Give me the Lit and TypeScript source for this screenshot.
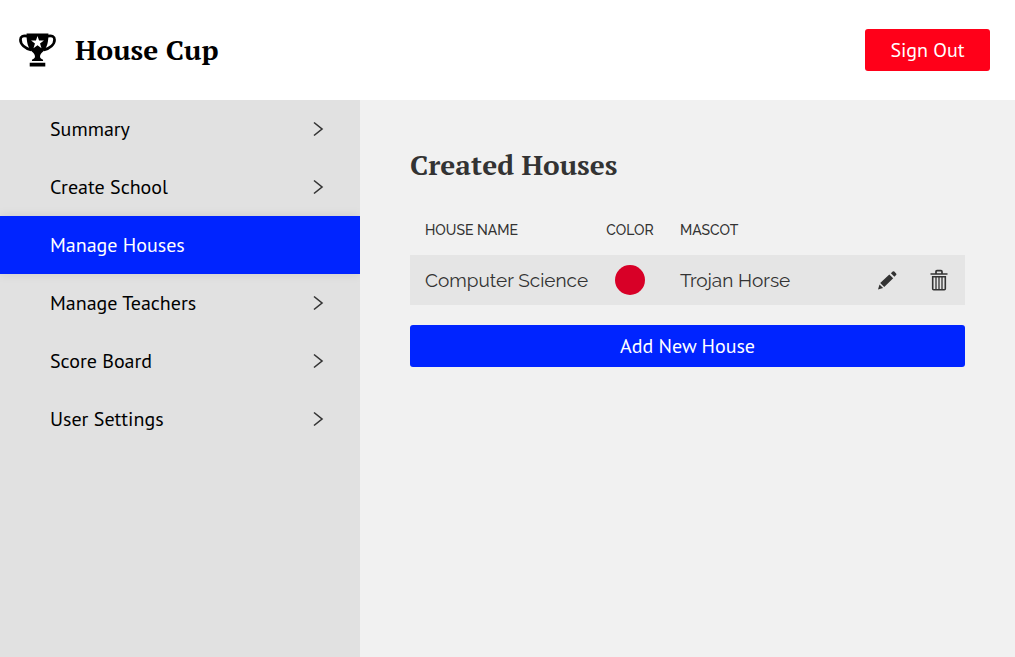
import { LitElement, html, css, svg } from "lit";
import { customElement, property, state } from "lit/decorators.js";
import { classMap } from "lit/directives/class-map.js";
import { styleMap } from "lit/directives/style-map.js";

interface House {
  name: string;
  color: string;
  mascot: string;
}

const trophy = svg`
  <path fill="none" stroke="currentColor" stroke-width="2.800" d="M8.500 3.800C4 2.800 1.500 4.200 1.500 7.600c0 4.600 4.600 8.600 11 10.400M29.500 3.800c4.500-1 7 .4 7 3.800 0 4.600-4.600 8.600-11 10.400"/>
  <path fill="currentColor" d="M7.800 1h22.400c.2 8-1.300 15-5.400 18.500-2.200 1.800-3.200 3.300-3.200 5.500 0 1.300.9 2 3.100 3v1.200H13.300V28c2.200-1 3.100-1.700 3.100-3 0-2.200-1-3.700-3.200-5.500C9.100 16 7.600 9 7.800 1zM11 31h16v4H11z"/>
  <path fill="#fff" d="M19 3.600l1.600 4.700h5l-4 3 1.500 4.800-4.100-2.900-4.100 2.900 1.500-4.800-4-3h5z"/>`;

@customElement("side-nav")
class SideNav extends LitElement {
  static styles = css`
    :host { display: block; overflow: hidden; background: #e1e1e1; }
    .item {
      display: flex;
      align-items: center;
      justify-content: space-between;
      height: 58px;
      padding: 0 36px 0 50px;
      box-sizing: border-box;
      color: #000;
      font: 20px "PT Sans", "Noto Sans", sans-serif;
      text-decoration: none;
    }
    .active {
      background: #0024ff;
      color: #fff;
      box-shadow: 0 0 10px rgba(0, 0, 0, 0.1);
    }
    .chevron { width: 12px; height: 16px; color: #333; }
  `;

  @property({ attribute: false }) items: string[] = [];
  @state() private current = "Manage Houses";

  render() {
    return html`<nav aria-label="Main">
      ${this.items.map((item) => {
        const active = item === this.current;
        return html`<a
          class=${classMap({ item: true, active })}
          href="#"
          aria-current=${active ? "page" : "false"}
          @click=${(e: Event) => {
            e.preventDefault();
            this.current = item;
          }}
          ><span>${item}</span>${active
            ? null
            : html`<svg class="chevron" viewBox="0 0 12 16" aria-hidden="true">
                <path d="M2 1.500l8 6.500-8 6.500" fill="none" stroke="currentColor" stroke-width="1.600" />
              </svg>`}</a>`;
      })}
    </nav>`;
  }
}

@customElement("house-table")
class HouseTable extends LitElement {
  static styles = css`
    :host { display: block; color: #333; font-family: "Raleway", "Lato", sans-serif; }
    table { width: 100%; border-collapse: collapse; table-layout: fixed; }
    th, td { padding: 0; text-align: left; height: 50px; }
    th { font-size: 14px; font-weight: 500; text-transform: uppercase; }
    tbody { background: #e5e5e5; font-size: 19px; }
    .name { width: 175px; padding-left: 15px; }
    .color { width: 60px; text-align: center; }
    .mascot { padding-left: 20px; }
    .actions { width: 104px; }
    .swatch { display: block; width: 30px; height: 30px; margin: 0 auto; border-radius: 50%; }
    .buttons { display: flex; }
    .icon {
      display: grid;
      place-items: center;
      width: 52px;
      height: 50px;
      padding: 0;
      border: 0;
      background: none;
      color: #333;
      cursor: pointer;
    }
    .icon svg { width: 20px; height: 22px; }
  `;

  @property({ attribute: false }) houses: House[] = [];

  render() {
    return html`<table>
      <thead>
        <tr>
          <th class="name" scope="col">House Name</th>
          <th class="color" scope="col">Color</th>
          <th class="mascot" scope="col">Mascot</th>
          <td class="actions"></td>
        </tr>
      </thead>
      <tbody>
        ${this.houses.map(
          (h) => html`<tr>
            <td class="name">${h.name}</td>
            <td class="color"><span class="swatch" style=${styleMap({ background: h.color })}></span></td>
            <td class="mascot">${h.mascot}</td>
            <td class="actions">
              <div class="buttons">
                <button class="icon" aria-label="Edit">
                  <svg viewBox="0 0 20 22" fill="currentColor">
                    <path d="M12.300 5.500l3.900 3.800-9 8.700-4-3.900zM13.900 4.300l1.800-1.700q.8-.7 1.600 0l1.800 1.800q.8.8 0 1.600l-1.700 1.800zM2.500 15.500l3.600 3.500L1 20.600z"/>
                  </svg>
                </button>
                <button class="icon" aria-label="Delete">
                  <svg viewBox="0 0 20 22" fill="none" stroke="currentColor">
                    <path stroke-width="1.700" d="M1.500 5h17M7 4.500V2.700q0-1 1-1h4q1 0 1 1v1.800"/>
                    <path stroke-width="1.600" d="M3.700 7.700h12.600v12q0 1-1 1H4.700q-1 0-1-1z"/>
                    <path stroke-width="1.300" d="M7 8v12.500M10 8v12.500M13 8v12.500"/>
                  </svg>
                </button>
              </div>
            </td>
          </tr>`
        )}
      </tbody>
    </table>`;
  }
}

@customElement("app-root")
class AppRoot extends LitElement {
  static styles = css`
    :host {
      display: grid;
      grid-template: auto 1fr / 360px 1fr;
      min-height: 100vh;
      background: #f1f1f1;
    }
    .header {
      grid-column: 1 / -1;
      display: flex;
      align-items: center;
      height: 100px;
      padding: 0 25px 0 19px;
      box-sizing: border-box;
      background: #fff;
    }
    .logo { width: 37px; height: 36px; margin-right: 19px; }
    h1, h2 { margin: 0; font: 700 28px/40px "PT Serif", "Liberation Serif", serif; }
    h2 { margin-bottom: 20px; color: #333; }
    .button {
      height: 42px;
      border: 0;
      border-radius: 3px;
      color: #fff;
      font: 20px "PT Sans", "Noto Sans", sans-serif;
      cursor: pointer;
    }
    .sign-out { width: 125px; margin-left: auto; background: #ff0019; }
    .main { padding: 45px 50px; }
    .add { display: block; width: 100%; margin-top: 20px; background: #0024ff; }
  `;

  private items = ["Summary", "Create School", "Manage Houses", "Manage Teachers", "Score Board", "User Settings"];
  private houses: House[] = [{ name: "Computer Science", color: "#d80027", mascot: "Trojan Horse" }];

  render() {
    return html`
      <header class="header">
        <svg class="logo" viewBox="0 0 38 36" aria-hidden="true">${trophy}</svg>
        <h1>House Cup</h1>
        <button class="button sign-out">Sign Out</button>
      </header>
      <side-nav .items=${this.items}></side-nav>
      <main class="main">
        <h2>Created Houses</h2>
        <house-table .houses=${this.houses}></house-table>
        <button class="button add">Add New House</button>
      </main>
    `;
  }
}
